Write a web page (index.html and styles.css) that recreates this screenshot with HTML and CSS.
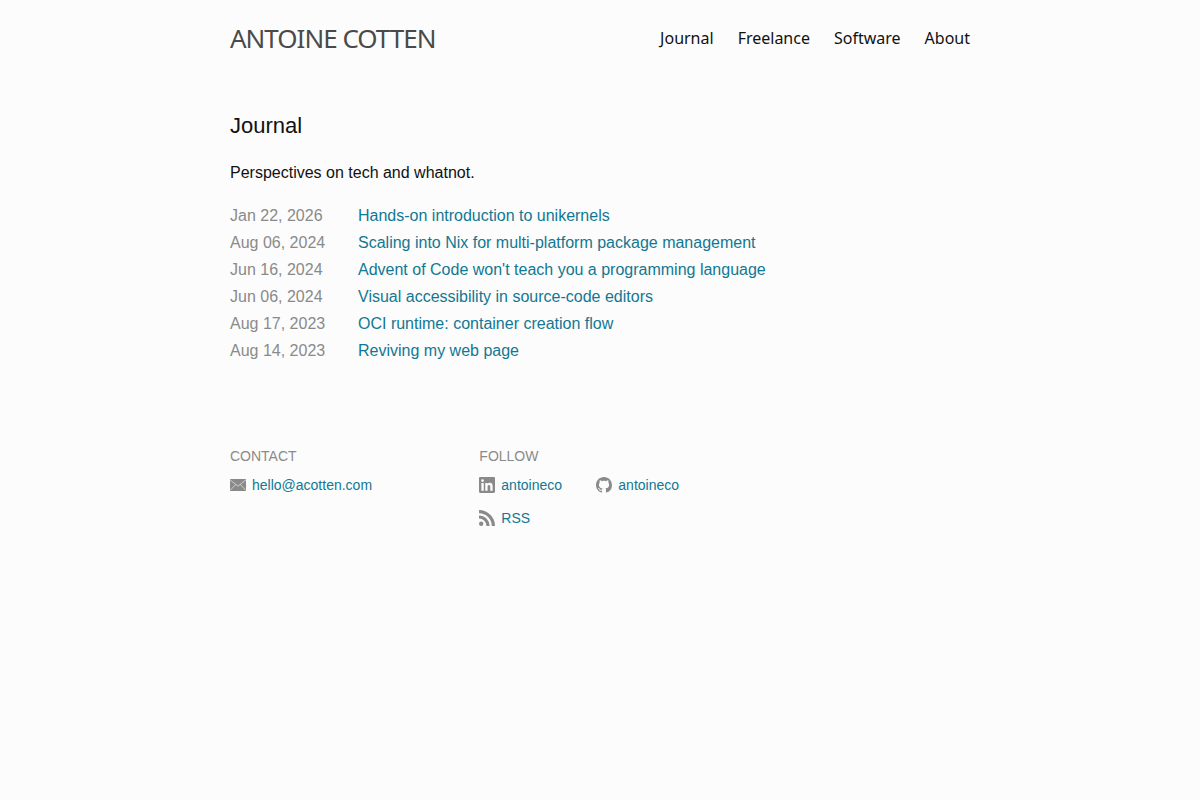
FILE: index.html
```html
<!DOCTYPE html>
<html lang="en">
<head>
    <meta charset="UTF-8">
    <meta name="viewport" content="width=device-width, initial-scale=1.0">
    <title>Journal</title>
    <link rel="stylesheet" href="styles.css">
</head>
<body>
    <header class="site-header wrapper">
        <a class="site-title" href="#">ANTOINE COTTEN</a>
        <nav class="site-nav">
            <a href="#">Journal</a>
            <a href="#">Freelance</a>
            <a href="#">Software</a>
            <a href="#">About</a>
        </nav>
    </header>

    <main class="wrapper">
        <h1 class="page-title">Journal</h1>
        <p class="intro">Perspectives on tech and whatnot.</p>
        <ul class="posts">
            <li><time datetime="2026-01-22">Jan 22, 2026</time><a href="#">Hands-on introduction to unikernels</a></li>
            <li><time datetime="2024-08-06">Aug 06, 2024</time><a href="#">Scaling into Nix for multi-platform package management</a></li>
            <li><time datetime="2024-06-16">Jun 16, 2024</time><a href="#">Advent of Code won't teach you a programming language</a></li>
            <li><time datetime="2024-06-06">Jun 06, 2024</time><a href="#">Visual accessibility in source-code editors</a></li>
            <li><time datetime="2023-08-17">Aug 17, 2023</time><a href="#">OCI runtime: container creation flow</a></li>
            <li><time datetime="2023-08-14">Aug 14, 2023</time><a href="#">Reviving my web page</a></li>
        </ul>
    </main>

    <footer class="site-footer wrapper">
        <section>
            <h2 class="footer-title">CONTACT</h2>
            <ul class="links">
                <li>
                    <a href="mailto:hello@acotten.com">
                        <svg class="icon" viewBox="0 0 16 16"><path d="M0 2h16v12H0z"/><path class="icon-line" d="M0 2.800l8 6.400 8-6.400M0 13.400l5.800-5.900M16 13.400l-5.800-5.900"/></svg>
                        <span>hello@acotten.com</span>
                    </a>
                </li>
            </ul>
        </section>
        <section>
            <h2 class="footer-title">FOLLOW</h2>
            <ul class="links social">
                <li>
                    <a href="#">
                        <svg class="icon" viewBox="0 0 16 16"><path d="M13.632 13.635h-2.370V9.922c0-.886-.018-2.025-1.234-2.025-1.235 0-1.424.964-1.424 1.960v3.778h-2.370V6H8.510v1.040h.030c.318-.600 1.092-1.233 2.247-1.233 2.400 0 2.845 1.580 2.845 3.637zM3.558 4.955c-.762 0-1.376-.617-1.376-1.377 0-.758.614-1.375 1.376-1.375.760 0 1.376.617 1.376 1.375 0 .760-.617 1.377-1.376 1.377zm1.188 8.680H2.370V6h2.376zM14.816 0H1.180C.528 0 0 .516 0 1.153v13.694C0 15.484.528 16 1.180 16h13.635c.652 0 1.185-.516 1.185-1.153V1.153C16 .516 15.467 0 14.816 0z"/></svg>
                        <span>antoineco</span>
                    </a>
                </li>
                <li>
                    <a href="#">
                        <svg class="icon" viewBox="0 0 16 16"><path d="M8 0C3.580 0 0 3.580 0 8c0 3.540 2.290 6.530 5.470 7.590.4.070.55-.170.55-.380 0-.190-.010-.820-.010-1.490-2.010.370-2.530-.490-2.690-.940-.090-.230-.480-.940-.820-1.130-.280-.150-.680-.520-.010-.530.630-.010 1.080.580 1.230.820.720 1.210 1.870.870 2.330.660.070-.520.280-.870.510-1.070-1.780-.200-3.640-.890-3.640-3.950 0-.870.310-1.590.820-2.150-.080-.200-.360-1.020.080-2.120 0 0 .670-.210 2.200.820.640-.180 1.320-.270 2-.270s1.360.090 2 .270c1.530-1.040 2.200-.820 2.200-.820.440 1.100.160 1.920.080 2.120.510.560.820 1.270.820 2.150 0 3.070-1.870 3.750-3.650 3.950.290.250.540.730.540 1.480 0 1.070-.010 1.930-.010 2.200 0 .210.150.460.550.380A8.010 8.010 0 0 0 16 8c0-4.420-3.580-8-8-8z"/></svg>
                        <span>antoineco</span>
                    </a>
                </li>
                <li>
                    <a href="#">
                        <svg class="icon" viewBox="0 0 16 16"><path d="M2.200 11.600a2.200 2.200 0 1 1 0 4.400 2.200 2.200 0 0 1 0-4.400zM0 5.400v3.100A7.500 7.500 0 0 1 7.500 16h3.100A10.600 10.600 0 0 0 0 5.400zM0 0v3.200A12.800 12.800 0 0 1 12.800 16H16A16 16 0 0 0 0 0z"/></svg>
                        <span>RSS</span>
                    </a>
                </li>
            </ul>
        </section>
    </footer>
</body>
</html>
```
FILE: styles.css
```css
body {
    margin: 0;
    background: #fcfcfc;
    color: #111;
    font: 16px/27px "Liberation Sans", Arial, sans-serif;
}

a {
    color: #117893;
    text-decoration: none;
}

ul {
    margin: 0;
    padding: 0;
    list-style: none;
}

.wrapper {
    max-width: 740px;
    margin: 0 auto;
    padding: 0 30px;
}

/* Header */
.site-header {
    display: flex;
    flex-wrap: wrap;
    align-items: center;
    justify-content: space-between;
    padding-top: 20px;
    padding-bottom: 20px;
    font-family: "Noto Sans", sans-serif;
}

.site-title {
    color: #4a4a4a;
    font-size: 26px;
    line-height: 36px;
    letter-spacing: -1px;
}

.site-nav {
    display: flex;
    gap: 24px;
}

.site-nav a {
    color: #111;
}

/* Journal */
.page-title {
    margin: 36px 0 20px;
    font-size: 22px;
    font-weight: 400;
    line-height: 27px;
}

.intro {
    margin: 0 0 16px;
}

.posts li {
    display: flex;
}

.posts time {
    flex: 0 0 128px;
    color: #8a8a8a;
}

/* Footer */
.site-footer {
    display: grid;
    grid-template-columns: 1fr 2fr;
    gap: 4px;
    margin-top: 80px;
    font-size: 14px;
    line-height: 24px;
}

.footer-title {
    margin: 0 0 5px;
    color: #8a8a8a;
    font-size: 14px;
    font-weight: 400;
}

.links a {
    display: flex;
    align-items: center;
    gap: 6px;
}

.social {
    display: grid;
    grid-template-columns: 117px 117px;
    row-gap: 9px;
}

.icon {
    width: 16px;
    height: 16px;
    fill: #8a8a8a;
}

.icon-line {
    fill: none;
    stroke: #fcfcfc;
    stroke-width: 0.6;
}
```
